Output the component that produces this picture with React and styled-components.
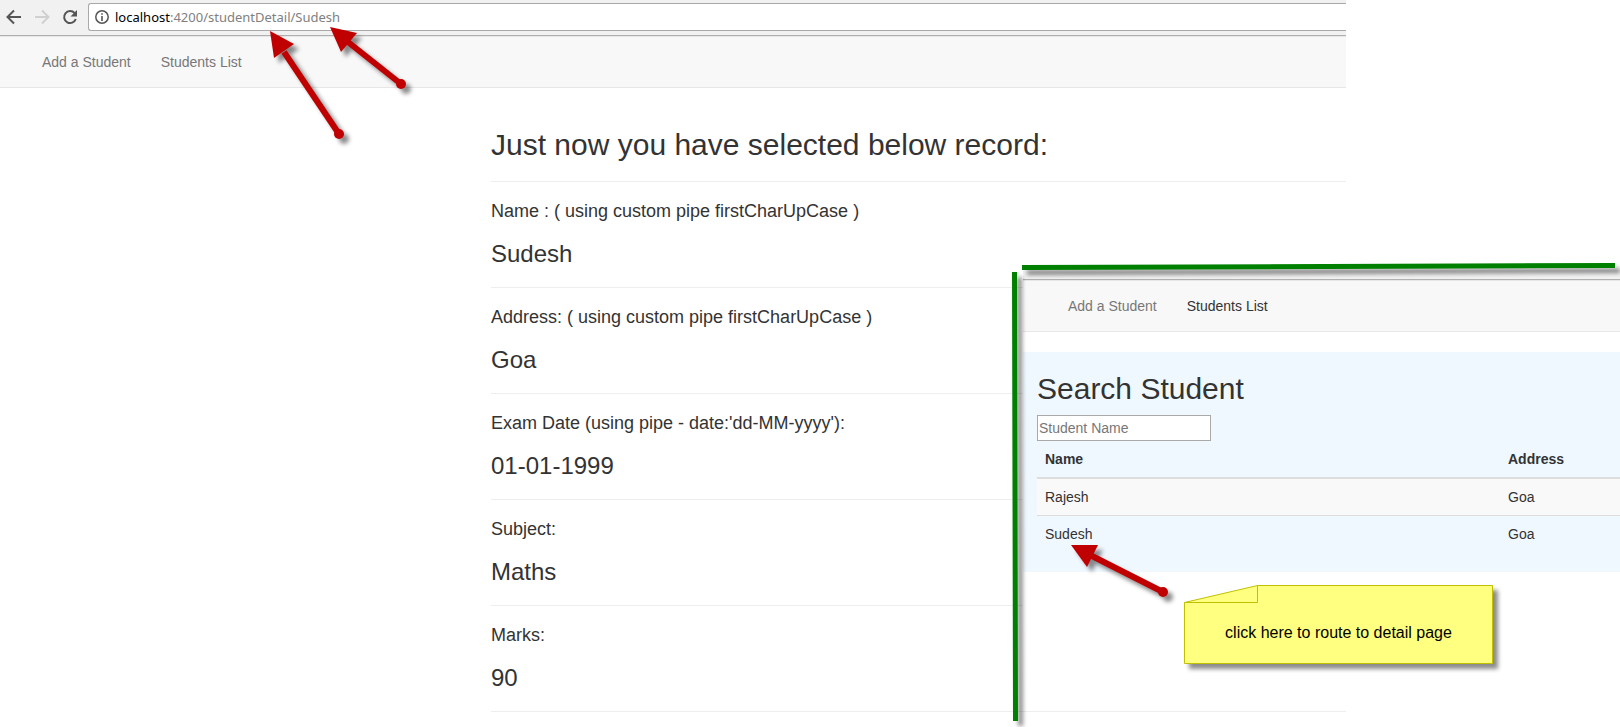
import React from "react";
import styled, { createGlobalStyle } from "styled-components";

const GlobalStyle = createGlobalStyle`
  *, *::before, *::after { box-sizing: border-box; }
  body {
    margin: 0;
    background: #fff;
    color: #333;
    font: 14px/20px "Liberation Sans", Arial, sans-serif;
  }
`;

const Page = styled.div`
  position: relative;
  overflow: hidden;
  padding-bottom: 15px;
`;

const BrowserWindow = styled.div`
  margin-right: 274px;
`;

const Toolbar = styled.div`
  display: flex;
  align-items: center;
  height: 36px;
  padding-bottom: 1px;
  background: #f1f1f1;
  border-bottom: 1px solid #b0b0b0;
`;

const ToolButton = styled.button`
  display: flex;
  justify-content: center;
  width: 28px;
  padding: 0;
  border: 0;
  background: none;
  color: ${(p) => (p.disabled ? "#d0d0d0" : "#555")};
`;

const AddressBar = styled.div`
  display: flex;
  flex: 1;
  align-items: center;
  height: 28px;
  margin-left: 4px;
  padding-left: 6px;
  border: 1px solid #a9a9a9;
  border-right: 0;
  border-radius: 3px 0 0 3px;
  background: #fff;
  font-family: "Noto Sans", sans-serif;
  font-size: 13px;
`;

const Host = styled.label`
  margin-left: 6px;
  color: #000;
`;

const UrlInput = styled.input`
  flex: 1;
  min-width: 0;
  padding: 0;
  border: 0;
  outline: 0;
  background: none;
  color: #808080;
  font: inherit;
`;

const Nav = styled.nav`
  display: flex;
  padding-left: ${(p) => p.$inset}px;
  background: #f8f8f8;
  border: solid #e7e7e7;
  border-width: 1px 0;
`;

const NavLink = styled.a`
  padding: 15px;
  color: ${(p) => (p.$active ? "#333" : "#777")};
  text-decoration: none;
`;

const Detail = styled.main`
  margin-left: 491px;
  padding-top: 20px;
`;

const Title = styled.h2`
  margin: 20px 0 10px;
  font-size: 30px;
  font-weight: 400;
  line-height: 33px;
`;

const Rule = styled.hr`
  margin: 20px 0;
  border: 0;
  border-top: 1px solid #eee;
`;

const FieldLabel = styled.h4`
  margin: 10px 0;
  font-size: 18px;
  font-weight: 400;
  line-height: 19px;
`;

const FieldValue = styled.h3`
  margin: 20px 0 10px;
  font-size: 24px;
  font-weight: 400;
  line-height: 26px;
`;

const ListWindow = styled.section`
  position: absolute;
  top: 270px;
  left: 1023px;
  right: 0;
  padding-bottom: 120px;
  overflow: hidden;
  background: #fff;
`;

const ToolbarEdge = styled.div`
  height: 10px;
  background: #f1f1f1;
  border-bottom: 1px solid #b0b0b0;
`;

const SearchPanel = styled.div`
  display: flow-root;
  margin-top: 20px;
  padding: 0 0 20px 14px;
  background: #f0f8ff;
`;

const SearchInput = styled.input`
  display: block;
  width: 174px;
  height: 26px;
  padding: 1px;
  border: 1px solid #a9a9a9;
  background: #fff;
  color: #333;
  font: inherit;
  &::placeholder { color: #777; opacity: 1; }
`;

const Table = styled.table`
  width: 100%;
  border-collapse: separate;
  border-spacing: 0;
  table-layout: fixed;
  text-align: left;
`;

const HeadCell = styled.th`
  width: ${(p) => (p.$wide ? "463px" : "auto")};
  padding: 8px;
  border-bottom: 2px solid #ddd;
`;

const Row = styled.tr`
  background: ${(p) => (p.$striped ? "#f9f9f9" : "transparent")};
`;

const Cell = styled.td`
  padding: 8px;
  tr + tr > & { border-top: 1px solid #ddd; }
`;

const Annotations = styled.svg`
  position: absolute;
  top: 0;
  left: 0;
  overflow: visible;
  pointer-events: none;
  filter: drop-shadow(5px 5px 2px rgba(0, 0, 0, 0.45));
`;

const Note = styled.aside`
  position: absolute;
  top: 585px;
  left: 1184px;
  display: flex;
  align-items: center;
  justify-content: center;
  width: 309px;
  height: 79px;
  padding-top: 16px;
  isolation: isolate;
  color: #000;
  font-size: 16px;
`;

const NotePaper = styled.svg`
  position: absolute;
  inset: 0;
  z-index: -1;
  overflow: visible;
  filter: drop-shadow(5px 5px 2px rgba(0, 0, 0, 0.45));
`;

const fields = [
  ["Name : ( using custom pipe firstCharUpCase )", "Sudesh"],
  ["Address: ( using custom pipe firstCharUpCase )", "Goa"],
  ["Exam Date (using pipe - date:'dd-MM-yyyy'):", "01-01-1999"],
  ["Subject:", "Maths"],
  ["Marks:", "90"],
];

const students = [
  ["Rajesh", "Goa"],
  ["Sudesh", "Goa"],
];

const arrows = [
  { head: "270,31 294,44 274,58", from: [284, 52], to: [339, 134] },
  { head: "330,27 357,33 341,52", from: [348, 42], to: [401, 84] },
  { head: "1071,545 1098,545 1087,567", from: [1092, 556], to: [1163, 592] },
];

function SiteNav({ inset, active }) {
  return (
    <Nav $inset={inset}>
      <NavLink href="#add">Add a Student</NavLink>
      <NavLink href="#list" $active={active}>Students List</NavLink>
    </Nav>
  );
}

function ArrowIcon({ flip }) {
  return (
    <svg width="16" height="16" viewBox="0 0 16 16" fill="none" stroke="currentColor" strokeWidth="2" aria-hidden="true">
      <path d={flip ? "M1 8H14M8 1.500l6.500 6.500L8 14.500" : "M15 8H2M8 1.500L1.500 8 8 14.500"} />
    </svg>
  );
}

export default function App() {
  return (
    <Page>
      <GlobalStyle />
      <BrowserWindow>
        <Toolbar>
          <ToolButton aria-label="Back"><ArrowIcon /></ToolButton>
          <ToolButton aria-label="Forward" disabled><ArrowIcon flip /></ToolButton>
          <ToolButton aria-label="Reload">
            <svg width="16" height="16" viewBox="0 0 16 16" aria-hidden="true">
              <path d="M12.600 4A6 6 0 1 0 13.800 10" fill="none" stroke="currentColor" strokeWidth="2" />
              <path d="M15 1v6.500H8.500z" fill="currentColor" />
            </svg>
          </ToolButton>
          <AddressBar>
            <svg width="14" height="14" viewBox="0 0 14 14" aria-hidden="true">
              <circle cx="7" cy="7" r="6.200" fill="none" stroke="#555" strokeWidth="1.500" />
              <path d="M6.200 3.200h1.600v1.600H6.200zM6.200 6h1.600v5H6.200z" fill="#555" />
            </svg>
            <Host htmlFor="url">localhost</Host>
            <UrlInput id="url" defaultValue=":4200/studentDetail/Sudesh" />
          </AddressBar>
        </Toolbar>
        <SiteNav inset={27} />
        <Detail>
          <Title>Just now you have selected below record:</Title>
          <Rule />
          {fields.map(([label, value]) => (
            <React.Fragment key={label}>
              <FieldLabel>{label}</FieldLabel>
              <FieldValue>{value}</FieldValue>
              <Rule />
            </React.Fragment>
          ))}
        </Detail>
      </BrowserWindow>

      <ListWindow>
        <ToolbarEdge />
        <SiteNav inset={30} active />
        <SearchPanel>
          <Title>Search Student</Title>
          <SearchInput aria-label="Student Name" placeholder="Student Name" />
          <Table>
            <thead>
              <tr>
                <HeadCell $wide>Name</HeadCell>
                <HeadCell>Address</HeadCell>
              </tr>
            </thead>
            <tbody>
              {students.map(([name, address], i) => (
                <Row key={name} $striped={i % 2 === 0}>
                  <Cell>{name}</Cell>
                  <Cell>{address}</Cell>
                </Row>
              ))}
            </tbody>
          </Table>
        </SearchPanel>
      </ListWindow>

      <Annotations width="1" height="1" aria-hidden="true">
        <path d="M1022 267.500L1615 265.500M1014.500 272L1015.500 721" stroke="#008000" strokeWidth="5" />
        {arrows.map(({ head, from, to }) => (
          <g key={head} fill="#c00000">
            <path d={`M${from}L${to}`} stroke="#c00000" strokeWidth="6" />
            <polygon points={head} />
            <circle cx={to[0]} cy={to[1]} r="5" />
          </g>
        ))}
      </Annotations>

      <Note>
        <NotePaper width="309" height="79" aria-hidden="true">
          <path d="M.5 17.500L73.500.5H308.500V78.500H.5Z" fill="#ffff80" stroke="#c0c000" />
          <path d="M73.500.5V17.500H.5" fill="none" stroke="#c0c000" />
        </NotePaper>
        click here to route to detail page
      </Note>
    </Page>
  );
}
